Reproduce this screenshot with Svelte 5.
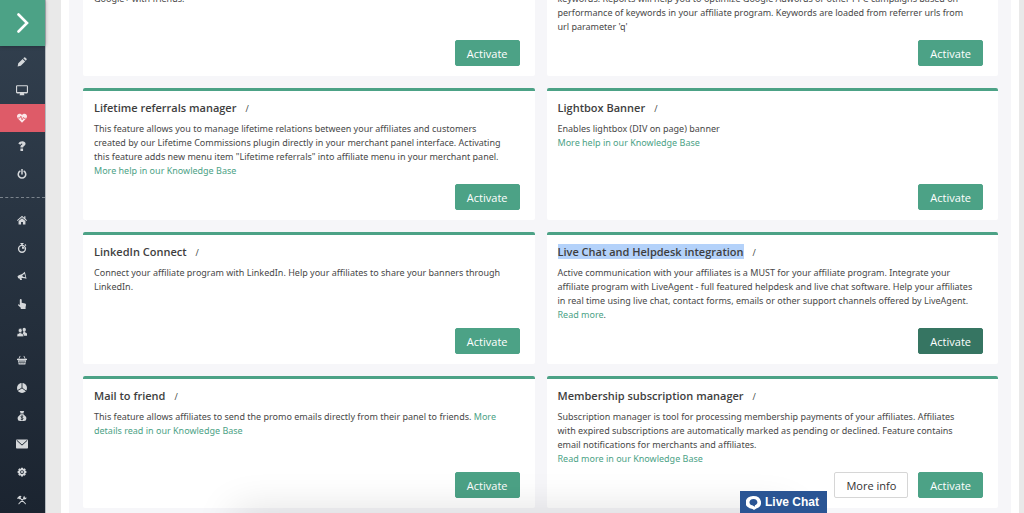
<script>
  const tools = ['pencil', 'monitor', 'heart', 'question', 'power'];
  const sections = ['home', 'timer', 'horn', 'hand', 'users', 'basket', 'pie', 'money', 'mail', 'gear', 'tools'];
  const labels = {
    pencil: 'Edit', monitor: 'Screen', heart: 'Features', question: 'Help', power: 'Log out',
    home: 'Home', timer: 'Timing', horn: 'Promotion', hand: 'Clicks', users: 'Affiliates',
    basket: 'Orders', pie: 'Reports', money: 'Payouts', mail: 'Emails', gear: 'Configuration', tools: 'Tools'
  };

  const cards = [
    {
      title: 'Google+ Connect',
      text: 'Connect your affiliate program with Google+. Help your affiliates to share your banners on\nGoogle+ with friends.'
    },
    {
      title: 'Keywords report',
      text: "This feature will add to your merchant panel new reports with statistics of performing\nkeywords. Reports will help you to optimize Google Adwords or other PPC campaigns based on\nperformance of keywords in your affiliate program. Keywords are loaded from referrer urls from\nurl parameter 'q'"
    },
    {
      title: 'Lifetime referrals manager',
      text: 'This feature allows you to manage lifetime relations between your affiliates and customers\ncreated by our Lifetime Commissions plugin directly in your merchant panel interface. Activating\nthis feature adds new menu item "Lifetime referrals" into affiliate menu in your merchant panel.\n',
      link: 'More help in our Knowledge Base'
    },
    {
      title: 'Lightbox Banner',
      text: 'Enables lightbox (DIV on page) banner\n',
      link: 'More help in our Knowledge Base'
    },
    {
      title: 'LinkedIn Connect',
      text: 'Connect your affiliate program with LinkedIn. Help your affiliates to share your banners through\nLinkedIn.'
    },
    {
      title: 'Live Chat and Helpdesk integration',
      text: 'Active communication with your affiliates is a MUST for your affiliate program. Integrate your\naffiliate program with LiveAgent - full featured helpdesk and live chat software. Help your affiliates\nin real time using live chat, contact forms, emails or other support channels offered by LiveAgent.\n',
      link: 'Read more', tail: '.', selected: true
    },
    {
      title: 'Mail to friend',
      text: 'This feature allows affiliates to send the promo emails directly from their panel to friends. ',
      link: 'More\ndetails read in our Knowledge Base'
    },
    {
      title: 'Membership subscription manager',
      text: 'Subscription manager is tool for processing membership payments of your affiliates. Affiliates\nwith expired subscriptions are automatically marked as pending or declined. Feature contains\nemail notifications for merchants and affiliates.\n',
      link: 'Read more in our Knowledge Base', info: true
    }
  ];
</script>

{#snippet icon(name)}
  <svg class="icon" class:wide={name === 'monitor' || name === 'mail'} viewBox="0 0 16 16" aria-hidden="true">
    {#if name === 'pencil'}
      <path d="M1 15l1-5 7-7 4 4-7 7zM10 2l1.500-1.300q.8-.6 1.600 0l2.200 2.200q.6.800 0 1.600L14 6z" />
    {:else if name === 'monitor'}
      <path fill-rule="evenodd" d="M1.500 1.500h13q1.500 0 1.500 1.500v8q0 1.500-1.500 1.500h-4l.8 2.500H4.700l.8-2.500h-4Q0 12.500 0 11V3q0-1.500 1.500-1.500zM1.500 3v7.500h13V3z" />
    {:else if name === 'heart'}
      <path d="M8 15.500L1 8.300C-1.200 5.200.3 1 4 1c2 0 3.200 1 4 2.300C8.800 2 10 1 12 1c3.700 0 5.200 4.200 3 7.300z" />
      <path d="M1 8h3.500l1.700-3 2 6 2-4 .8 1.500h3" fill="none" stroke="#de5b68" stroke-width="1.300" />
    {:else if name === 'question'}
      <path d="M5.500 10.500V9c0-2.400 3.200-2.600 3.200-4.100C8.700 3.600 6.700 3.500 5.600 5.900L2.200 4.200C4.500-1.200 13.700-.9 13.700 4.500c0 3.200-3.900 3.400-3.900 6zM5.500 11.800h4.200v4H5.500z" />
    {:else if name === 'power'}
      <path d="M4.700 3.500a6 6 0 1 0 6.600 0M8 .5v7.500" fill="none" stroke="currentColor" stroke-width="2.400" stroke-linecap="round" />
    {:else if name === 'home'}
      <path d="M8 1L0 8.300l1 1.200L8 3.600l7 5.900 1-1.200-2.500-2.300V2h-2v2.200z" />
      <path d="M8 5l5.500 4.700V15h-4v-4h-3v4h-4V9.700z" />
    {:else if name === 'timer'}
      <path d="M5.500 0h5v1.500H9.200v1.700H6.800V1.500H5.500zM12 3l1.300-1.300L15 3.400l-1.300 1.300z" />
      <circle cx="8" cy="9.300" r="5.500" fill="none" stroke="currentColor" stroke-width="2.200" />
      <path d="M8 9.300V5a4.300 4.300 0 0 1 4 4.300z" />
    {:else if name === 'horn'}
      <path d="M12.500 1Q8.500 5.500 3 6.800L.8 8.500l1 3 2.200.3 1 2.700h3L7.200 11.300q4.300-.3 8 1.200z" />
      <path d="M11.800 4.500l1.700 5.500q-2-.8-4-.8L8.300 7.300z" fill="#263240" />
    {:else if name === 'hand'}
      <path d="M4.500 1.500q0-1.500 1.500-1.500t1.500 1.500V6l5.500 1q1.500.4 1.500 2l-.8 4v3H6v-2L1.700 10q-.7-1.400.8-1.800l2 1.200z" />
    {:else if name === 'users'}
      <ellipse cx="11.500" cy="4.200" rx="2.700" ry="3.200" />
      <path d="M10.200 7h2.600v1.300l2.400 1.200q.8.500.8 1.800V14H9z" />
      <g stroke="#26313d" stroke-width="1">
        <path d="M3.800 8.500h2.700v1.200l2.800 1.200q1 .5 1 2v2.600H0v-2.600q0-1.500 1-2l2.800-1.200z" />
        <ellipse cx="5.200" cy="5.600" rx="3" ry="3.600" />
      </g>
    {:else if name === 'basket'}
      <path d="M0 6h16v2H0zM1.200 8.500h13.600L13.300 15H2.700z" />
      <path d="M3 6l2-4.500M13 6l-2-4.500" stroke="currentColor" stroke-width="1.400" />
      <path d="M4.700 9.500l.4 4.500M8 9.500V14M11.300 9.500l-.4 4.500M2 11.600h12" stroke="#222d38" stroke-width=".9" />
    {:else if name === 'pie'}
      <circle cx="8" cy="8" r="8" />
      <path d="M8 8V0M8 8l7 5M8 8l-7 4" stroke="#1f2933" stroke-width="1.400" />
    {:else if name === 'money'}
      <path d="M4.500 0h7l-1.200 3.300H5.700zM5.500 4h5v1h-5zM5.300 5.500h5.400Q15 8.500 15 12.500q0 3.500-4 3.500H5q-4 0-4-3.500Q1 8.500 5.300 5.500z" />
      <path d="M10 8.300Q6.200 7.300 6.200 9.200C6.200 11 9.800 10.500 9.800 12.500q0 1.800-3.800.8M8 7v8" fill="none" stroke="#1d2731" stroke-width="1.300" />
    {:else if name === 'mail'}
      <path d="M1 2h14q1 0 1 1v10q0 1-1 1H1q-1 0-1-1V3q0-1 1-1z" />
      <path d="M1 3l7 6.500L15 3" fill="none" stroke="#1c2630" stroke-width="1.300" />
    {:else if name === 'gear'}
      <path fill-rule="evenodd" d="M6.500 1h3l.5 2 2-1.100L14.100 4 13 6l2 .5v3l-2 .5 1.100 2-2.100 2.100L10 13l-.5 2h-3L6 13l-2 1.100L1.900 12 3 10l-2-.5v-3L3 6 1.900 4 4 1.900 6 3zM8 5a3 3 0 1 0 0 6 3 3 0 0 0 0-6z" />
      <circle cx="8" cy="8" r="1.700" />
    {:else}
      <path d="M3 14L11.500 5M5 5l8.500 9" fill="none" stroke="currentColor" stroke-width="1.700" stroke-linecap="round" />
      <path d="M0 5l3.500-3.500Q6 1 7.500 2L5.500 3.500l1 1.500-2 2L3 5.500 1.500 6.500zM10 5q-1-3 2.500-4L12 3l1.500 1.500 2-.5Q15 7.500 11.500 7z" />
    {/if}
  </svg>
{/snippet}

<div class="page">
  <nav class="sidebar" aria-label="Main menu">
    <button class="expand" aria-label="Expand menu">
      <svg viewBox="0 0 12 20" aria-hidden="true"><path d="M1.500 1.500L10 10l-8.500 8.500" fill="none" stroke="#fff" stroke-width="2.600" stroke-linecap="round" /></svg>
    </button>
    <ul>
      {#each tools as name}
        <li><a href="#{name}" class:active={name === 'heart'} aria-label={labels[name]}>{@render icon(name)}</a></li>
      {/each}
    </ul>
    <ul class="sections">
      {#each sections as name}
        <li><a href="#{name}" aria-label={labels[name]}>{@render icon(name)}</a></li>
      {/each}
    </ul>
  </nav>

  <main>
    <div class="pane">
      <div class="grid">
        {#each cards as card}
          <article>
            <h2><span class:selected={card.selected}>{card.title}</span><small>/</small></h2>
            <p>{card.text}{#if card.link}<a href="#help">{card.link}</a>{card.tail ?? ''}{/if}</p>
            <footer>
              {#if card.info}<button class="plain">More info</button>{/if}
              <button class:pressed={card.selected}>Activate</button>
            </footer>
          </article>
        {/each}
      </div>
    </div>
  </main>

  <div class="shade"></div>
  <button class="chat">
    <svg viewBox="0 0 16 16" aria-hidden="true">
      <path fill="#fff" fill-rule="evenodd" d="M8 1a8 7 0 0 1 3 13.500L8.500 16 7 15A8 7 0 0 1 8 1zM8 4.200C2.500 4.200 2.500 10.800 6.700 11L9.500 12.500V11C13.500 10.200 13 4.200 8 4.200z" />
    </svg>
    Live Chat
  </button>
</div>

<style>
  :global(body) { margin: 0; }
  .page {
    display: flex;
    height: 100vh;
    overflow: hidden;
    background: #e9e9e9;
    color: #484848;
    font-family: "Open Sans", sans-serif;
  }
  button { font-family: inherit; cursor: pointer; }
  .sidebar {
    flex: none;
    width: 45px;
    border-right: 1px solid #b4b9be;
    background: linear-gradient(#334150, #1b2430);
  }
  .expand {
    display: flex;
    align-items: center;
    justify-content: center;
    width: 100%;
    height: 46px;
    padding: 0;
    border: 0;
    background: #4ca286;
    box-shadow: 0 0 4px rgba(0, 0, 0, 0.35);
  }
  .expand svg { width: 12px; height: 20px; }
  ul { list-style: none; margin: 0; padding: 2px 0 9px; }
  .sections { padding-top: 8px; border-top: 1px dashed #7b848d; }
  ul a {
    display: flex;
    align-items: center;
    justify-content: center;
    height: 28px;
    padding-right: 1px;
    color: #d5d8db;
  }
  ul a.active { background: #de5b68; color: #fbe6e8; }
  .icon { width: 10px; height: 10px; fill: currentColor; }
  .icon.wide { width: 12px; height: 12px; }
  main { flex: 1; min-width: 0; padding: 0 5px 0 15px; }
  .pane { display: flow-root; padding: 0 8px; background: #fff; }
  .grid {
    display: grid;
    grid-template-columns: 1fr 1fr;
    grid-auto-rows: minmax(132px, auto);
    gap: 12px;
    padding: 0 13px 12px 14px;
    margin-top: -56px;
    background: #f6f6f9;
  }
  article {
    display: flex;
    flex-direction: column;
    box-sizing: border-box;
    padding: 9px 11px 10px;
    border-top: 3px solid #4ca286;
    border-radius: 2px;
    background: #fff;
  }
  h2 { margin: 0 0 6px; font-size: 11px; line-height: 15px; font-weight: 600; color: #3e3e3e; }
  h2 small { margin-left: 9px; font-size: 9px; font-weight: 400; }
  .selected { display: inline-block; background: #b4d2fa; }
  p { margin: 0; font-family: "Noto Sans", sans-serif; font-size: 9px; line-height: 14px; white-space: pre-line; }
  p a { color: #4ca286; text-decoration: none; }
  footer { display: flex; justify-content: flex-end; gap: 10px; margin-top: auto; padding-right: 4px; }
  footer button {
    box-sizing: border-box;
    height: 26px;
    padding: 0 11px;
    border: 1px solid #4ca286;
    border-radius: 2px;
    background: #4ca286;
    color: #fff;
    font-size: 11px;
  }
  footer .pressed { background: #367562; border-color: #367562; }
  footer .plain { background: #fff; border-color: #d6d6d6; color: #333; }
  .shade {
    position: fixed;
    left: 240px;
    right: 240px;
    bottom: -24px;
    height: 20px;
    box-shadow: 0 0 40px 6px rgba(0, 0, 0, 0.14);
    pointer-events: none;
  }
  .chat {
    position: fixed;
    right: 197px;
    bottom: 0;
    display: flex;
    align-items: center;
    gap: 4px;
    height: 22px;
    padding: 0 8px 0 6px;
    border: 0;
    background: #2a5594;
    color: #fff;
    font: bold 12px "Liberation Sans", sans-serif;
  }
  .chat svg { width: 15px; height: 15px; }
</style>
